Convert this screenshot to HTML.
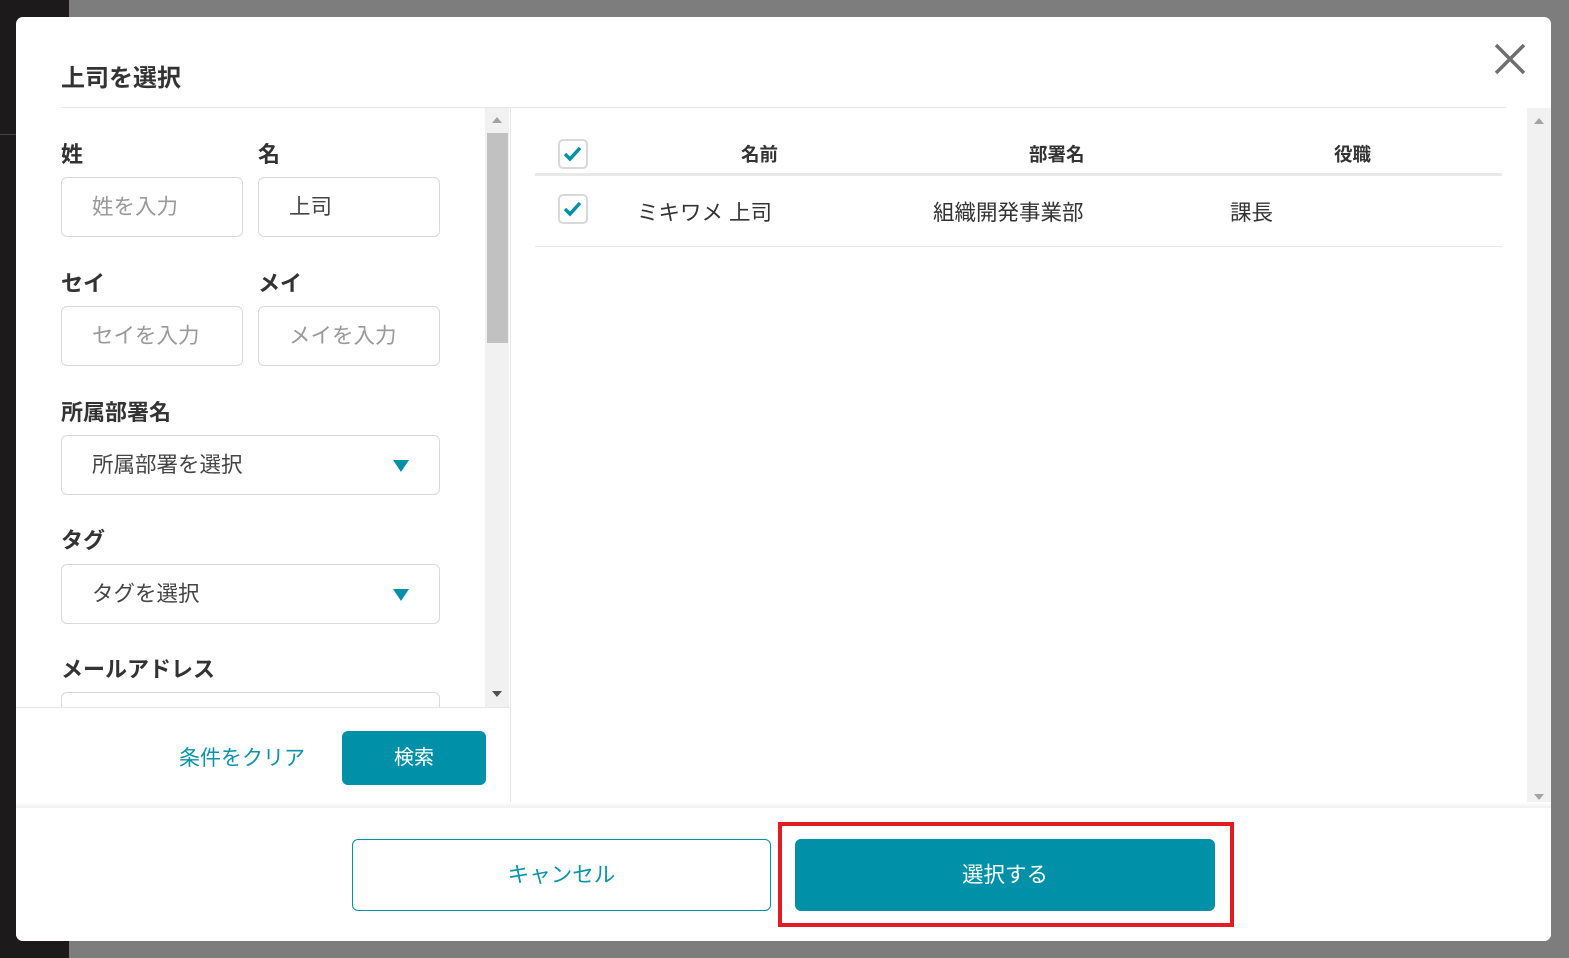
<!DOCTYPE html>
<html><head><meta charset="utf-8"><style>
*{box-sizing:border-box;margin:0;padding:0}
body{width:1569px;height:958px;background:#7d7d7d;position:relative;overflow:hidden;font-family:"Liberation Sans","Noto Sans CJK JP",sans-serif;color:#333}
.dark{position:absolute;left:0;top:0;width:69px;height:958px;background:#1c1a1a}
.modal{position:absolute;left:16px;top:17px;width:1535px;height:924px;background:#fff;border-radius:7px;overflow:hidden}
.a{position:absolute}
.title{left:45px;top:41px;font-size:24px;font-weight:bold;color:#333}
.hr{left:45px;top:90px;width:1445px;height:1px;background:#e6e6e6}
.lbl{font-size:22px;font-weight:bold;color:#333;line-height:1.2}
.inp{border:1px solid #d9d9d9;border-radius:6px;height:60px;font-size:21.5px;color:#999;padding:14px 30px 0;background:#fff;line-height:1.4}
.sel{color:#444}
.tri{position:absolute;right:30px;top:24px;width:0;height:0;border-left:8px solid transparent;border-right:8px solid transparent;border-top:12px solid #0091a8}
.sb{background:#f1f1f1}
.up{width:0;height:0;border-left:5px solid transparent;border-right:5px solid transparent;border-bottom:6px solid #a3a3a3}
.dn{width:0;height:0;border-left:5px solid transparent;border-right:5px solid transparent;border-top:6px solid #505050}
.cb{width:30px;height:30px;border:2px solid #d9d9d9;border-radius:5px;background:#fff}
.th{font-size:18.5px;font-weight:bold;color:#333;line-height:1.2}
.td{font-size:21.5px;color:#333;line-height:1.2}
</style></head><body>
<div class="dark"></div>
<div class="a" style="left:0;top:134px;width:69px;height:1px;background:#444"></div>
<div class="modal">
  <div class="a title">上司を選択</div>
  <svg class="a" style="left:1478px;top:26px" width="32" height="32" viewBox="0 0 32 32"><path d="M2 2L30 30M30 2L2 30" stroke="#6e6e6e" stroke-width="3.5"/></svg>
  <div class="a hr"></div>

  <div class="a lbl" style="left:45px;top:125px">姓</div>
  <div class="a lbl" style="left:242px;top:125px">名</div>
  <div class="a inp" style="left:45px;top:160px;width:182px">姓を入力</div>
  <div class="a inp sel" style="left:242px;top:160px;width:182px">上司</div>
  <div class="a lbl" style="left:45px;top:254px">セイ</div>
  <div class="a lbl" style="left:242px;top:254px">メイ</div>
  <div class="a inp" style="left:45px;top:289px;width:182px">セイを入力</div>
  <div class="a inp" style="left:242px;top:289px;width:182px">メイを入力</div>
  <div class="a lbl" style="left:45px;top:383px">所属部署名</div>
  <div class="a inp sel" style="left:45px;top:418px;width:379px">所属部署を選択<div class="tri"></div></div>
  <div class="a lbl" style="left:45px;top:511px">タグ</div>
  <div class="a inp sel" style="left:45px;top:547px;width:379px">タグを選択<div class="tri"></div></div>
  <div class="a lbl" style="left:45px;top:640px">メールアドレス</div>
  <div class="a inp" style="left:45px;top:675px;width:379px;height:40px"></div>
  <div class="a sb" style="left:469px;top:91px;width:24px;height:599px"></div>
  <div class="a up" style="left:476px;top:100px"></div>
  <div class="a" style="left:471px;top:116px;width:21px;height:210px;background:#c1c1c1"></div>
  <div class="a dn" style="left:476px;top:674px"></div>
  <div class="a" style="left:0;top:690px;width:494px;height:1px;background:#e6e6e6"></div>
  <div class="a" style="left:0;top:691px;width:494px;height:100px;background:#fff"></div>
  <div class="a" style="left:163px;top:729px;font-size:21px;color:#0a93a9;line-height:1.2">条件をクリア</div>
  <div class="a" style="left:326px;top:714px;width:144px;height:54px;background:#0091a8;border-radius:6px;color:#fff;font-size:20px;text-align:center;line-height:54px">検索</div>
  <div class="a" style="left:494px;top:91px;width:1px;height:700px;background:#e6e6e6"></div>

  <div class="a cb" style="left:542px;top:122px"><svg width="26" height="26" viewBox="0 0 26 26"><path d="M5 13l5 5 10-11" stroke="#0091a8" stroke-width="3.5" fill="none"/></svg></div>
  <div class="a th" style="left:725px;top:127px">名前</div>
  <div class="a th" style="left:1013px;top:127px">部署名</div>
  <div class="a th" style="left:1318px;top:127px">役職</div>
  <div class="a" style="left:519px;top:156px;width:967px;height:3px;background:#e8e8e8"></div>
  <div class="a cb" style="left:542px;top:177px"><svg width="26" height="26" viewBox="0 0 26 26"><path d="M5 13l5 5 10-11" stroke="#0091a8" stroke-width="3.5" fill="none"/></svg></div>
  <div class="a td" style="left:621px;top:184px">ミキワメ 上司</div>
  <div class="a td" style="left:917px;top:184px">組織開発事業部</div>
  <div class="a td" style="left:1214px;top:184px">課長</div>
  <div class="a" style="left:519px;top:229px;width:967px;height:1px;background:#e8e8e8"></div>
  <div class="a sb" style="left:1511px;top:91px;width:24px;height:700px"></div>
  <div class="a up" style="left:1518px;top:101px"></div>
  <div class="a dn" style="left:1518px;top:777px;border-top-color:#a3a3a3"></div>

  <div class="a" style="left:0;top:785px;width:1535px;height:6px;background:linear-gradient(#fff,#f0f0f0)"></div>
  <div class="a" style="left:0;top:791px;width:1535px;height:133px;background:#fff"></div>
  <div class="a" style="left:336px;top:822px;width:419px;height:72px;border:1px solid #0091a8;border-radius:6px;color:#0a93a9;font-size:21.5px;text-align:center;line-height:70px">キャンセル</div>
  <div class="a" style="left:762px;top:805px;width:456px;height:105px;border:4px solid #e31b23"></div>
  <div class="a" style="left:779px;top:822px;width:420px;height:72px;background:#0091a8;border-radius:6px;color:#fff;font-size:21.5px;text-align:center;line-height:72px">選択する</div>
</div>
</body></html>
